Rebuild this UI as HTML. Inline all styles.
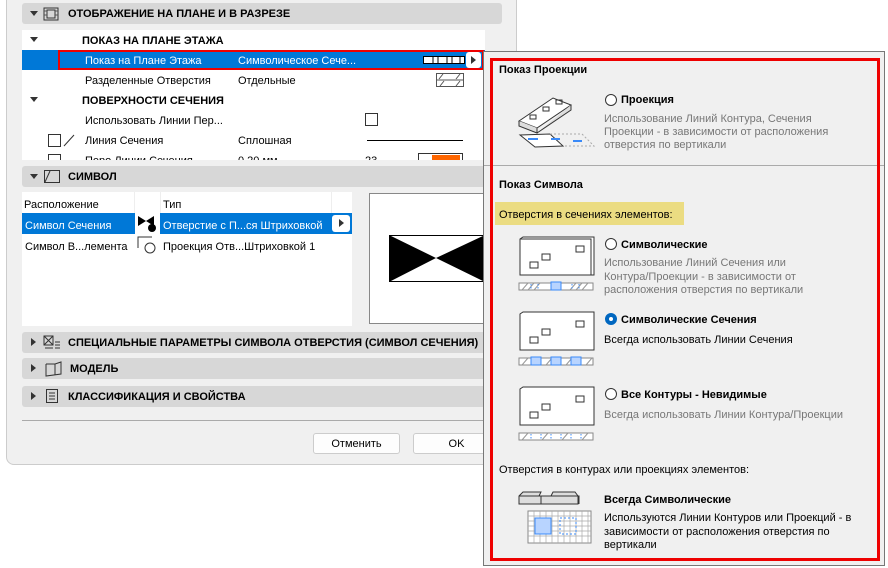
<!DOCTYPE html>
<html><head><meta charset="utf-8"><style>
*{margin:0;padding:0;box-sizing:border-box}
body{width:888px;height:568px;overflow:hidden;background:#fff;font-family:"Liberation Sans",sans-serif;font-size:11px;color:#000;position:relative}
.a{position:absolute;white-space:nowrap}
.t{margin-top:2px}
.hdr{position:absolute;left:22px;width:480px;height:21px;background:#d7d7d7;border-radius:3px;font-weight:bold;font-size:11px;line-height:23px}
.tri{position:absolute;left:8px;top:8px;width:0;height:0;border-left:4px solid transparent;border-right:4px solid transparent;border-top:5px solid #333}
.trir{position:absolute;left:9px;top:6px;width:0;height:0;border-top:4px solid transparent;border-bottom:4px solid transparent;border-left:5px solid #333}
.g{color:#777}
.b{font-weight:bold}
.radio{position:absolute;width:12px;height:12px;border:1px solid #333;border-radius:50%;background:#fff}
.btn{position:absolute;height:21px;background:#fdfdfd;border:1px solid #ccc;border-radius:3px;text-align:center;line-height:21px}
</style></head><body>
<div class="a" style="left:6px;top:-5px;width:511px;height:470px;background:#f0f0f0;border:1px solid #ccc;border-radius:0 0 8px 8px"></div>
<div class="hdr" style="top:3px"><div class="tri"></div>
<svg class="a" style="left:21px;top:4px" width="16" height="14"><rect x="1" y="1" width="14" height="12" fill="none" stroke="#333"/><rect x="4" y="3" width="8" height="8" fill="none" stroke="#333"/><path d="M1 4h3M1 8h3M12 4h3M12 8h3" stroke="#555"/></svg>
<span class="a" style="left:46px">ОТОБРАЖЕНИЕ НА ПЛАНЕ И В РАЗРЕЗЕ</span></div>
<div class="a" style="left:22px;top:30px;width:463px;height:130px;background:#fff"></div>
<div class="a" style="left:30px;top:37px;border-left:4px solid transparent;border-right:4px solid transparent;border-top:5px solid #333"></div>
<span class="a b t" style="left:82px;top:33px">ПОКАЗ НА ПЛАНЕ ЭТАЖА</span>
<div class="a" style="left:22px;top:50px;width:463px;height:20px;background:#0078d7"></div>
<div class="a" style="left:58px;top:50px;width:426px;height:20px;border:2px solid #e00"></div>
<span class="a t" style="left:85px;top:53px;color:#fff">Показ на Плане Этажа</span>
<span class="a t" style="left:238px;top:53px;color:#fff">Символическое Сече...</span>
<svg class="a" style="left:423px;top:56px" width="42" height="8"><rect x="0.5" y="0.5" width="41" height="7" fill="#fff" stroke="#000"/><path d="M10 0v8M15 0v8M24 0v8M29 0v8M37 0v8" stroke="#000"/></svg>
<div class="a" style="left:466px;top:52px;width:15px;height:16px;background:#fff;border-radius:3px"></div>
<div class="a" style="left:471px;top:56px;border-top:4px solid transparent;border-bottom:4px solid transparent;border-left:5px solid #333"></div>
<span class="a t" style="left:85px;top:73px">Разделенные Отверстия</span>
<span class="a t" style="left:238px;top:73px">Отдельные</span>
<svg class="a" style="left:436px;top:73px" width="28" height="14"><rect x="0.5" y="0.5" width="27" height="13" fill="#fff" stroke="#555"/><path d="M0 7h28M3 6l4-5M20 13l4-5M4 13l4-5M20 6l4-5" stroke="#555"/></svg>
<div class="a" style="left:30px;top:97px;border-left:4px solid transparent;border-right:4px solid transparent;border-top:5px solid #333"></div>
<span class="a b t" style="left:82px;top:93px">ПОВЕРХНОСТИ СЕЧЕНИЯ</span>
<span class="a t" style="left:85px;top:113px">Использовать Линии Пер...</span>
<div class="a" style="left:365px;top:113px;width:13px;height:13px;border:1px solid #333;background:#fff"></div>
<div class="a" style="left:48px;top:134px;width:13px;height:13px;border:1px solid #333"></div>
<svg class="a" style="left:63px;top:134px" width="12" height="13"><path d="M1 12L11 1" stroke="#333"/></svg>
<span class="a t" style="left:85px;top:133px">Линия Сечения</span>
<span class="a t" style="left:238px;top:133px">Сплошная</span>
<div class="a" style="left:367px;top:140px;width:96px;height:1px;background:#000"></div>
<div class="a" style="left:22px;top:150px;width:463px;height:10px;overflow:hidden">
<div class="a" style="left:26px;top:4px;width:13px;height:13px;border:1px solid #333"></div>
<span class="a" style="left:63px;top:5px">Перо Линии Сечения</span><span class="a" style="left:216px;top:5px">0,20 мм</span><span class="a" style="left:343px;top:5px">23</span>
<div class="a" style="left:396px;top:3px;width:45px;height:12px;border:1px solid #333"></div><div class="a" style="left:410px;top:5px;width:28px;height:8px;background:#f60"></div></div>
<div class="hdr" style="top:166px"><div class="tri"></div>
<svg class="a" style="left:22px;top:4px" width="16" height="13"><rect x="0.5" y="0.5" width="15" height="12" fill="none" stroke="#333"/><path d="M1 12L6 1" stroke="#333"/></svg>
<span class="a" style="left:46px">СИМВОЛ</span></div>
<div class="a" style="left:22px;top:192px;width:330px;height:134px;background:#fff"></div>
<div class="a" style="left:134px;top:192px;width:1px;height:21px;background:#eee"></div>
<div class="a" style="left:160px;top:192px;width:1px;height:21px;background:#eee"></div>
<div class="a" style="left:331px;top:192px;width:1px;height:21px;background:#eee"></div>
<span class="a t" style="left:24px;top:197px">Расположение</span><span class="a t" style="left:163px;top:197px">Тип</span>
<div class="a" style="left:22px;top:213px;width:330px;height:21px;background:#0078d7"></div>
<div class="a" style="left:135px;top:213px;width:25px;height:21px;background:#fff"></div>
<span class="a t" style="left:25px;top:218px;color:#fff">Символ Сечения</span>
<svg class="a" style="left:137px;top:214px" width="20" height="19"><path d="M1 2L9 7L1 12ZM17 2L9 7L17 12Z" fill="#000"/><circle cx="15" cy="14" r="4" fill="#000"/></svg>
<span class="a t" style="left:163px;top:218px;color:#fff">Отверстие с П...ся Штриховкой</span>
<div class="a" style="left:332px;top:215px;width:18px;height:17px;background:#fff;border-radius:3px"></div>
<div class="a" style="left:339px;top:219px;border-top:4px solid transparent;border-bottom:4px solid transparent;border-left:5px solid #333"></div>
<span class="a t" style="left:25px;top:239px">Символ В...лемента</span>
<svg class="a" style="left:137px;top:235px" width="20" height="19"><path d="M1 13V2H15" stroke="#333" fill="none"/><circle cx="13" cy="13" r="5" fill="#fff" stroke="#333"/></svg>
<span class="a t" style="left:163px;top:239px">Проекция Отв...Штриховкой 1</span>
<div class="a" style="left:369px;top:193px;width:120px;height:131px;background:#fff;border:1px solid #888"></div>
<svg class="a" style="left:389px;top:235px" width="96" height="48"><rect x="0.5" y="0.5" width="95" height="46" fill="#fff" stroke="#000"/><path d="M0 0L47 23L0 47ZM96 0L47 23L96 47Z" fill="#000"/></svg>
<div class="hdr" style="top:332px"><div class="trir"></div>
<svg class="a" style="left:21px;top:3px" width="18" height="16"><rect x="1" y="1" width="9" height="9" fill="none" stroke="#333"/><path d="M1 1l9 9M10 1l-9 9M12 7h5M12 10h5M12 13h5M2 13h8" stroke="#333"/></svg>
<span class="a" style="left:46px">СПЕЦИАЛЬНЫЕ ПАРАМЕТРЫ СИМВОЛА ОТВЕРСТИЯ (СИМВОЛ СЕЧЕНИЯ)</span></div>
<div class="hdr" style="top:358px"><div class="trir"></div>
<svg class="a" style="left:23px;top:3px" width="17" height="16"><path d="M1 3V15L16 13V1L10 3V14M1 3L10 3" fill="none" stroke="#333"/></svg>
<span class="a" style="left:48px">МОДЕЛЬ</span></div>
<div class="hdr" style="top:386px"><div class="trir"></div>
<svg class="a" style="left:24px;top:3px" width="13" height="15"><rect x="0.5" y="0.5" width="11" height="13" fill="none" stroke="#333"/><path d="M3 4h6M3 7h6M3 10h6" stroke="#333"/></svg>
<span class="a" style="left:46px">КЛАССИФИКАЦИЯ И СВОЙСТВА</span></div>
<div class="a" style="left:22px;top:420px;width:470px;height:1px;background:#aaa"></div>
<div class="btn" style="left:313px;top:433px;width:87px">Отменить</div>
<div class="btn" style="left:413px;top:433px;width:87px">OK</div>
<div class="a" style="left:483px;top:51px;width:402px;height:515px;background:#f0f0f0;border:1px solid #777"></div>
<div class="a" style="left:484px;top:165px;width:400px;height:1px;background:#aaa"></div>
<div class="a" style="left:490px;top:58px;width:390px;height:503px;border:3px solid #e00"></div>
<span class="a b" style="left:499px;top:64px">Показ Проекции</span>
<svg class="a" style="left:518px;top:90px" width="82" height="60"><path d="M1 31L35 8L53 15L19 38Z" fill="#fff" stroke="#333"/><path d="M1 31V36L19 43V38M19 43L53 20V15" fill="#ddd" stroke="#333"/><path d="M2 45L32 44L45 56L17 57Z" fill="#fff" stroke="#333"/><path d="M32 44L64 44L76 56L45 56" fill="none" stroke="#aaa" stroke-dasharray="2"/><path d="M10 49h10M33 49h9M55 51h9" stroke="#3a8af8" stroke-width="2"/><rect x="12" y="25" width="6" height="4" fill="none" stroke="#333"/><rect x="25" y="17" width="6" height="4" fill="none" stroke="#333"/><rect x="38" y="10" width="6" height="4" fill="none" stroke="#333"/></svg>
<div class="radio" style="left:605px;top:94px"></div>
<span class="a b" style="left:621px;top:94px">Проекция</span>
<div class="a g" style="left:604px;top:113px;line-height:13px">Использование Линий Контура, Сечения<br>Проекции - в зависимости от расположения<br>отверстия по вертикали</div>
<span class="a b" style="left:499px;top:179px">Показ Символа</span>
<div class="a" style="left:495px;top:202px;width:189px;height:23px;background:#ebdc82"></div>
<span class="a" style="left:499px;top:209px">Отверстия в сечениях элементов:</span>
<svg class="a" style="left:518px;top:236px" width="80" height="56"><path d="M2 3l3-2h71v38H2Z" fill="#fff" stroke="#333"/><path d="M2 3h71v36" fill="none" stroke="#333"/><rect x="12" y="26" width="8" height="6" fill="none" stroke="#333"/><rect x="24" y="18" width="8" height="6" fill="none" stroke="#333"/><rect x="58" y="10" width="8" height="6" fill="none" stroke="#333"/><rect x="1" y="47" width="74" height="7" fill="#fff" stroke="#888"/><path d="M4 54l6-7M10 54l6-7M16 54l6-7M52 54l6-7M58 54l6-7M64 54l6-7" stroke="#999"/><rect x="33" y="46" width="10" height="8" fill="#b8d4ff" stroke="#3a8af8"/><path d="M13 48v6M20 48v6M54 48v6M61 48v6" stroke="#3a8af8" stroke-dasharray="1.5"/></svg>
<div class="radio" style="left:605px;top:238px"></div>
<span class="a b" style="left:621px;top:239px">Символические</span>
<div class="a g" style="left:604px;top:257px;line-height:13.5px">Использование Линий Сечения или<br>Контура/Проекции - в зависимости от<br>расположения отверстия по вертикали</div>
<svg class="a" style="left:518px;top:311px" width="80" height="56"><path d="M2 3l3-2h71v38H2Z" fill="#fff" stroke="#333"/><rect x="12" y="26" width="8" height="6" fill="none" stroke="#333"/><rect x="24" y="18" width="8" height="6" fill="none" stroke="#333"/><rect x="58" y="10" width="8" height="6" fill="none" stroke="#333"/><rect x="1" y="47" width="74" height="7" fill="#fff" stroke="#888"/><path d="M4 54l6-7M28 54l6-7M48 54l6-7M68 54l6-7" stroke="#999"/><rect x="13" y="46" width="10" height="8" fill="#b8d4ff" stroke="#3a8af8"/><rect x="33" y="46" width="10" height="8" fill="#b8d4ff" stroke="#3a8af8"/><rect x="53" y="46" width="10" height="8" fill="#b8d4ff" stroke="#3a8af8"/></svg>
<div class="radio" style="left:605px;top:313px;border:4px solid #0067c0"></div>
<span class="a b" style="left:621px;top:314px">Символические Сечения</span>
<span class="a" style="left:604px;top:334px">Всегда использовать Линии Сечения</span>
<svg class="a" style="left:518px;top:386px" width="80" height="56"><path d="M2 3l3-2h71v38H2Z" fill="#fff" stroke="#333"/><rect x="12" y="26" width="8" height="6" fill="none" stroke="#333"/><rect x="24" y="18" width="8" height="6" fill="none" stroke="#333"/><rect x="58" y="10" width="8" height="6" fill="none" stroke="#333"/><rect x="1" y="47" width="74" height="7" fill="#fff" stroke="#888"/><path d="M4 54l6-7M24 54l6-7M44 54l6-7M64 54l6-7" stroke="#999"/><path d="M13 48v6M23 48v6M33 48v6M43 48v6M53 48v6M63 48v6" stroke="#3a8af8" stroke-dasharray="1.5"/></svg>
<div class="radio" style="left:605px;top:388px"></div>
<span class="a b" style="left:621px;top:389px">Все Контуры - Невидимые</span>
<span class="a g" style="left:604px;top:409px">Всегда использовать Линии Контура/Проекции</span>
<span class="a" style="left:499px;top:464px">Отверстия в контурах или проекциях элементов:</span>
<svg class="a" style="left:518px;top:490px" width="80" height="56"><path d="M1 6l4-4h18l-2 4h12l2-4h22l3 4v8H1Z" fill="#ddd" stroke="#333"/><path d="M1 6h22v8M33 6h28v8" fill="none" stroke="#333"/><rect x="10" y="21" width="63" height="32" fill="#fff" stroke="#888"/><path d="M10 26h63M10 31h63M10 36h63M10 41h63M10 46h63M16 21v32M22 21v32M28 21v32M34 21v32M40 21v32M46 21v32M52 21v32M58 21v32M64 21v32M70 21v32" stroke="#aaa" stroke-width=".7"/><rect x="17" y="28" width="16" height="16" fill="#b8d4ff" stroke="#3a8af8"/><rect x="42" y="28" width="16" height="16" fill="none" stroke="#3a8af8" stroke-dasharray="2"/></svg>
<span class="a b" style="left:604px;top:494px">Всегда Символические</span>
<div class="a" style="left:604px;top:512px;line-height:13.5px">Используются Линии Контуров или Проекций - в<br>зависимости от расположения отверстия по<br>вертикали</div>
</body></html>
